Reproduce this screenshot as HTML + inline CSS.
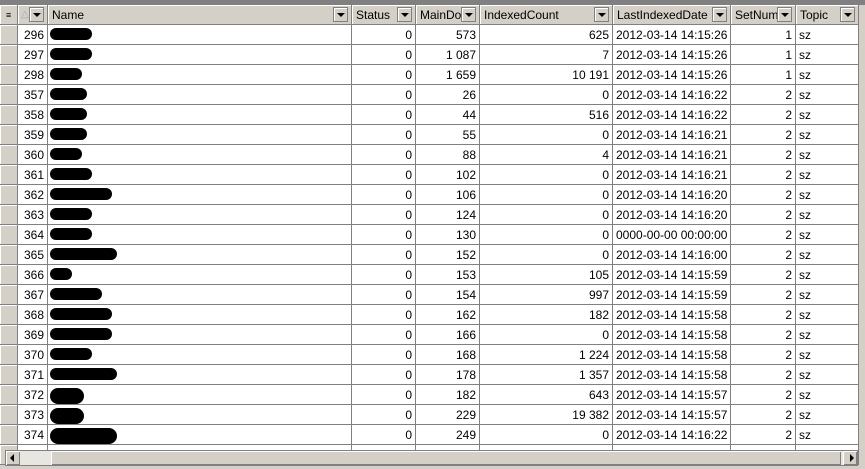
<!DOCTYPE html>
<html><head><style>
body{margin:0;width:865px;height:469px;overflow:hidden;background:#d4d0c8;font-family:"Liberation Sans",Arial,sans-serif;font-size:12px;position:relative}
#top{position:absolute;left:0;top:0;width:865px;height:5px;background:#808080}
.h{position:absolute;top:5px;height:20px;background:#d4d0c8;border-right:1px solid #808080;border-bottom:1px solid #808080;box-sizing:border-box;line-height:20px;padding-left:4px;color:#000;box-shadow:inset 1px 1px 0 #fff}
.dd{position:absolute;top:2px;right:3px;width:15px;height:15px;background:#d4d0c8;border:1px solid #808080;box-sizing:border-box;box-shadow:inset 1px 1px 0 #fff}
.dd:after{content:"";position:absolute;left:3px;top:5px;border-left:4px solid transparent;border-right:4px solid transparent;border-top:4px solid #000}
.c{position:absolute;height:20px;border-right:1px solid #808080;border-bottom:1px solid #808080;box-sizing:border-box;background:#fff;line-height:20px;padding:0 3px;white-space:nowrap;overflow:hidden}
.r{text-align:right}
.ind{background:#d4d0c8;box-shadow:inset 1px 1px 0 #fff}
.blob{position:absolute;background:#000;border-radius:10px;height:12px}
#hs{position:absolute;left:5px;top:450px;width:853px;height:16px;background:#e8e6e0;border:1px solid #808080;box-sizing:border-box}
.ab{position:absolute;top:0;width:14px;height:14px;background:#d4d0c8;box-shadow:inset 1px 1px 0 #fff,inset -1px -1px 0 #808080}
#th{position:absolute;left:45px;top:0;width:790px;height:14px;background:#d4d0c8;box-shadow:inset 1px 1px 0 #fff,inset -1px -1px 0 #808080}
</style></head><body>
<div id="top"></div>
<div id="g"></div>
<script>
var cols=[[0,18],[18,48],[48,352],[352,416],[416,480],[480,613],[613,731],[731,796],[796,859]];
var hdr=["","","Name","Status","MainDom","IndexedCount","LastIndexedDate","SetNumt","Topic"];
var rows=[[296,573,625,"2012-03-14 14:15:26",1,90],[297,"1 087",7,"2012-03-14 14:15:26",1,90],[298,"1 659","10 191","2012-03-14 14:15:26",1,80],[357,26,0,"2012-03-14 14:16:22",2,85],[358,44,516,"2012-03-14 14:16:22",2,85],[359,55,0,"2012-03-14 14:16:21",2,85],[360,88,4,"2012-03-14 14:16:21",2,80],[361,102,0,"2012-03-14 14:16:21",2,90],[362,106,0,"2012-03-14 14:16:20",2,110],[363,124,0,"2012-03-14 14:16:20",2,90],[364,130,0,"0000-00-00 00:00:00",2,90],[365,152,0,"2012-03-14 14:16:00",2,115],[366,153,105,"2012-03-14 14:15:59",2,70],[367,154,997,"2012-03-14 14:15:59",2,100],[368,162,182,"2012-03-14 14:15:58",2,110],[369,166,0,"2012-03-14 14:15:58",2,110],[370,168,"1 224","2012-03-14 14:15:58",2,90],[371,178,"1 357","2012-03-14 14:15:58",2,115],[372,182,643,"2012-03-14 14:15:57",2,82],[373,229,"19 382","2012-03-14 14:15:57",2,82],[374,249,0,"2012-03-14 14:16:22",2,115]];
var h="";
for(var i=0;i<cols.length;i++){var c=cols[i];
 if(i==0){h+='<div class="h" style="left:0;width:18px;padding:0"><span style="position:absolute;left:6px;top:0;font-size:9px">&#8801;</span></div>';continue;}
 if(i==1){h+='<div class="h" style="left:18px;width:30px;padding:0"><span style="position:absolute;left:3px;color:#aaa;font-size:10px">&#9651;</span><div class="dd"></div></div>';continue;}
 h+='<div class="h" style="left:'+c[0]+'px;width:'+(c[1]-c[0])+'px">'+hdr[i]+'<div class="dd"></div></div>';}
for(var r=0;r<22;r++){var y=25+r*20;var d=rows[r]||["","","","","",0];
 var v=["",d[0],"","0",d[1],d[2],d[3],d[4],d[3]?"sz":""];if(!rows[r])v[3]="";
 for(var i=0;i<cols.length;i++){var c=cols[i];
  var cls="c"+(i==0?" ind":"")+((i==1||i==3||i==4||i==5||i==7)?" r":"");
  h+='<div class="'+cls+'" style="left:'+c[0]+'px;top:'+y+'px;width:'+(c[1]-c[0])+'px">'+v[i]+'</div>';}
 if(d[5])h+='<div class="blob" style="left:50px;top:'+(y+3)+'px;width:'+(d[5]-48)+'px;height:'+(r>=18?16:12)+'px"></div>';}
h+='<div id="hs"><div class="ab" style="left:0">&nbsp;</div><div id="th"></div><div class="ab" style="right:0"></div></div>';
h+='<div style="position:absolute;left:10px;top:454px;border-top:4px solid transparent;border-bottom:4px solid transparent;border-right:4px solid #000"></div>';
h+='<div style="position:absolute;left:850px;top:454px;border-top:4px solid transparent;border-bottom:4px solid transparent;border-left:4px solid #000"></div>';
document.getElementById("g").innerHTML=h;
</script>
</body></html>
